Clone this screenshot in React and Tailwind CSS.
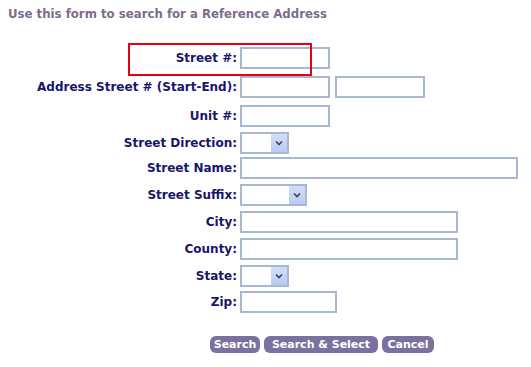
import React from 'react';

const Field = ({ w }) => (
  <input type="text" className={`h-[22px] border-2 border-[#a9b8d2] bg-white outline-none ${w}`} />
);

const Dropdown = ({ w }) => (
  <div className={`h-[22px] border-2 border-[#a9b8d2] bg-white flex justify-end ${w}`}>
    <div className="w-[16px] h-full bg-gradient-to-b from-[#d3def8] to-[#b9cbf3] flex items-center justify-center">
      <svg width="8" height="6" viewBox="0 0 8 6">
        <path d="M1 1.5 L4 4.5 L7 1.5" fill="none" stroke="#33406b" strokeWidth="1.6" />
      </svg>
    </div>
  </div>
);

const rows = [
  { label: 'Street #:', el: <Field w="w-[90px]" /> },
  {
    label: 'Address Street # (Start-End):',
    el: (
      <div className="flex gap-[5px]">
        <Field w="w-[90px]" />
        <Field w="w-[90px]" />
      </div>
    ),
  },
  { label: 'Unit #:', el: <Field w="w-[90px]" /> },
  { label: 'Street Direction:', el: <Dropdown w="w-[49px]" /> },
  { label: 'Street Name:', el: <Field w="w-[278px]" /> },
  { label: 'Street Suffix:', el: <Dropdown w="w-[67px]" /> },
  { label: 'City:', el: <Field w="w-[218px]" /> },
  { label: 'County:', el: <Field w="w-[218px]" /> },
  { label: 'State:', el: <Dropdown w="w-[49px]" /> },
  { label: 'Zip:', el: <Field w="w-[97px]" /> },
];

const App = () => {
  return (
    <div className="relative w-[531px] h-[367px] bg-white font-['DejaVu_Sans',sans-serif] font-bold text-[12px] overflow-hidden">
      <p className="pl-[8px] pt-[6px] text-[#7d6c8f] text-[11.75px] leading-[16px]">
        Use this form to search for a Reference Address
      </p>

      <div className="mt-[25px] grid grid-cols-[237px_auto] gap-x-[3px] grid-rows-[29px_29px_27px_25px_27px_27px_27px_27px_26px_22px]">
        {rows.map((r) => (
          <React.Fragment key={r.label}>
            <div className="h-[22px] flex items-center justify-end text-[#16166b] whitespace-nowrap">{r.label}</div>
            <div>{r.el}</div>
          </React.Fragment>
        ))}
      </div>

      <div className="mt-[23px] ml-[210px] flex gap-[4px]">
        <button className="h-[17px] w-[50px] rounded-[6px] bg-[#7b719e] text-white text-[11px] leading-none">Search</button>
        <button className="h-[17px] w-[114px] rounded-[6px] bg-[#7b719e] text-white text-[11px] leading-none">Search &amp; Select</button>
        <button className="h-[17px] w-[52px] rounded-[6px] bg-[#7b719e] text-white text-[11px] leading-none">Cancel</button>
      </div>

      <div className="absolute left-[128px] top-[43px] w-[184px] h-[33px] border-2 border-[#e60012]" />
    </div>
  );
};

export default App;
